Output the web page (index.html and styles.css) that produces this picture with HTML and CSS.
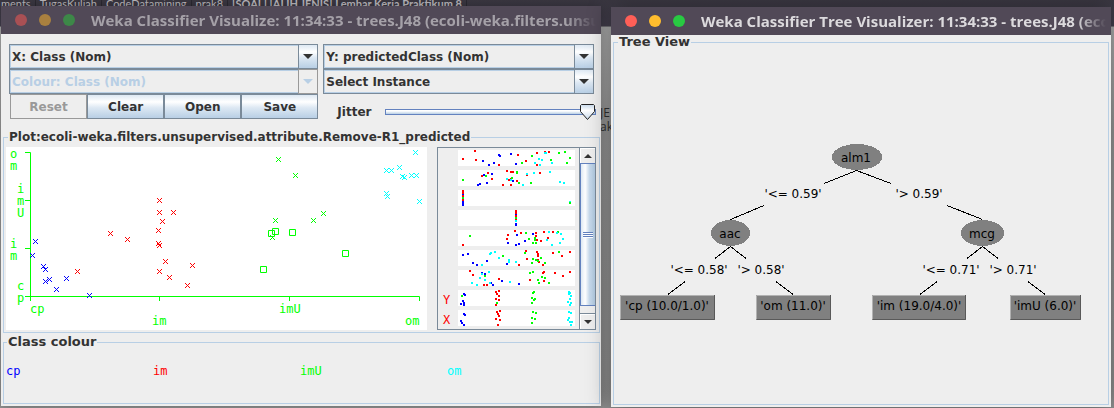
FILE: index.html
```html
<!DOCTYPE html>
<html lang="en">
<head>
<meta charset="utf-8">
<title>Weka Classifier Visualize</title>
<link rel="stylesheet" href="styles.css">
</head>
<body>
<div class="taskbar"><span>ments</span><span>TugasKuliah</span><span>CodeDatamining</span><span>prak8</span><span class="current">[SOAL] [ALIH JENIS] Lembar Kerja Praktikum 8</span></div>
<div class="file-label">JE<br>ak</div>
<main class="desktop">
  <section class="window plot-window">
    <header class="titlebar inactive">
      <i class="dot close"></i><i class="dot minimise"></i><i class="dot maximise"></i>
      <h1>Weka Classifier Visualize: 11:34:33 - trees.J48 (ecoli-weka.filters.unsup</h1>
    </header>
    <div class="window-body">
      <div class="controls">
        <div class="combo"><select aria-label="X axis"><option>X: Class (Nom)</option></select><span class="arrow"></span></div>
        <div class="combo"><select aria-label="Y axis"><option>Y: predictedClass (Nom)</option></select><span class="arrow"></span></div>
        <div class="combo disabled"><select aria-label="Colour" disabled><option>Colour: Class (Nom)</option></select><span class="arrow"></span></div>
        <div class="combo"><select aria-label="Shape"><option>Select Instance</option></select><span class="arrow"></span></div>
        <div class="buttons"><button disabled>Reset</button><button>Clear</button><button>Open</button><button>Save</button></div>
        <div class="jitter"><label for="jitter">Jitter</label><input id="jitter" type="range" min="0" max="100" value="100"></div>
      </div>
      <fieldset class="plot-panel">
        <legend>Plot:ecoli-weka.filters.unsupervised.attribute.Remove-R1_predicted</legend>
        <div class="plots">
          <svg class="plot" viewBox="6 147 421 183" role="img" aria-label="Scatter plot">
            <defs>
              <marker id="x-blue" class="mark" viewBox="0 0 5 5" markerWidth="5" markerHeight="5" refX="2" refY="2" markerUnits="userSpaceOnUse"><path class="cross blue" d="M0 0L5 5M5 0L0 5"/></marker>
              <marker id="x-red" class="mark" viewBox="0 0 5 5" markerWidth="5" markerHeight="5" refX="2" refY="2" markerUnits="userSpaceOnUse"><path class="cross red" d="M0 0L5 5M5 0L0 5"/></marker>
              <marker id="x-green" class="mark" viewBox="0 0 5 5" markerWidth="5" markerHeight="5" refX="2" refY="2" markerUnits="userSpaceOnUse"><path class="cross green" d="M0 0L5 5M5 0L0 5"/></marker>
              <marker id="x-cyan" class="mark" viewBox="0 0 5 5" markerWidth="5" markerHeight="5" refX="2" refY="2" markerUnits="userSpaceOnUse"><path class="cross cyan" d="M0 0L5 5M5 0L0 5"/></marker>
            </defs>
            <path class="axis" d="M25 152.500H30.500V296.500H419.500V301M25 200.500H30M25 248.500H30M25 296.500H30M30.500 296V301M159.500 296V301M289.500 296V301"/>
            <g class="axis-label">
              <text x="10" y="158">o</text><text x="10" y="170">m</text>
              <text x="17" y="193">i</text><text x="17" y="205">m</text><text x="17" y="217">U</text>
              <text x="10" y="248">i</text><text x="10" y="260">m</text>
              <text x="17" y="290">c</text><text x="17" y="302">p</text>
              <text x="30" y="313">cp</text><text x="152" y="325">im</text><text x="279" y="313">imU</text><text x="405" y="325">om</text>
            </g>
            <polyline class="xs-blue" points="35,241 32,255 43,266 45,269 45,281 49,279 66,278 56,289 89,295"/>
            <polyline class="xs-red" points="110,233 127,239 77,271 159,200 159,212 173,212 162,221 158,230 158,243 159,245 165,261 159,271 169,277 187,285 192,265"/>
            <polyline class="xs-green" points="278,159 295,175 323,213 313,220 275,220 272,237"/>
            <polyline class="xs-cyan" points="415,152 386,170 391,170 399,167 402,176 404,177 411,175 416,175 386,193 387,196 419,201"/>
            <path class="axis" d="M268.500 230.500h6v6h-6zM272.500 228.500h6v6h-6zM289.500 229.500h6v6h-6zM342.500 250.500h6v6h-6zM260.500 266.500h6v6h-6z"/>
          </svg>
          <div class="strips">
            <svg class="strip-plot" viewBox="8 8 141 181" role="img" aria-label="Attribute strips">
              <defs>
                <marker id="d-blue" markerWidth="2" markerHeight="2" refX="1" refY="1" markerUnits="userSpaceOnUse"><rect class="fill-blue" width="2" height="2"/></marker>
                <marker id="d-red" markerWidth="2" markerHeight="2" refX="1" refY="1" markerUnits="userSpaceOnUse"><rect class="fill-red" width="2" height="2"/></marker>
                <marker id="d-green" markerWidth="2" markerHeight="2" refX="1" refY="1" markerUnits="userSpaceOnUse"><rect class="fill-green" width="2" height="2"/></marker>
                <marker id="d-cyan" markerWidth="2" markerHeight="2" refX="1" refY="1" markerUnits="userSpaceOnUse"><rect class="fill-cyan" width="2" height="2"/></marker>
              </defs>
              <path class="strip" d="M28 10h117v16h-117zM28 30h117v16h-117zM28 50h117v16h-117zM28 70h117v16h-117zM28 90h117v16h-117zM28 110h117v16h-117zM28 130h117v16h-117zM28 150h117v16h-117zM28 170h117v16h-117z"/>
              <polyline class="ds-red" points="33,19 45,11 46,20 69,25 88,15 96,21 107,13 115,12 119,12 107,25 52,36 58,33 62,39 77,31 81,32 83,32 79,40 81,39 87,41 73,45 81,45 110,33 97,35 33,105 85,91 78,95 77,99 91,93 106,93 106,96 107,100 111,101 114,92 123,92 118,98 89,125 96,111 97,119 107,112 108,114 108,116 108,120 109,122 113,125 123,113 132,116 140,112 40,131 43,135 54,145 57,145 69,139 100,140 113,133 114,132 114,141 125,133 133,136 140,132 66,152 69,151 67,154 69,156 66,159 69,160 66,165 70,171 67,172 68,174 69,176 66,179 70,180 68,185"/>
              <polyline class="ds-blue" points="53,21 59,25 64,23 69,15 70,16 81,14 86,24 54,35 62,34 57,43 48,45 50,44 83,41 87,95 78,103 86,105 89,104 95,101 103,94 33,115 38,114 43,123 47,125 57,121 77,124 52,133 55,134 61,143 63,145 72,141 89,144 34,154 35,155 33,161 31,164 34,163 34,165 34,174 35,175 31,181 32,183 34,185"/>
              <polyline class="ds-green" points="92,23 102,16 121,20 129,13 135,12 140,18 137,23 33,40 56,36 87,32 87,33 82,38 89,43 101,43 40,96 96,93 99,99 105,98 105,100 103,103 106,103 128,92 73,116 95,113 103,119 106,120 111,118 115,123 102,123 108,121 129,112 55,136 100,133 103,132 108,140 109,143 112,137 115,138 119,143 32,156 67,163 103,153 104,152 102,158 105,159 104,160 102,163 103,172 106,173 102,178 105,179 102,183"/>
              <polyline class="ds-cyan" points="109,19 105,23 112,20 110,25 116,13 122,23 115,13 77,39 81,40 93,45 97,34 104,33 120,32 130,42 134,43 119,92 127,93 131,94 133,99 130,103 122,105 117,100 60,114 61,113 65,112 69,118 79,120 79,122 86,122 52,125 42,143 47,145 50,138 52,134 59,132 60,143 80,142 55,140 139,152 140,153 139,154 141,156 140,159 138,162 141,163 140,165 139,172 141,173 139,178 138,180 140,182 142,182 141,185"/>
              <path class="fill-red" d="M32 50h2v4h-2zM32 55h2v2h-2zM32 59h2v2h-2zM85 70h2v4h-2zM85 75h2v2h-2zM85 79h2v1h-2z"/>
              <path class="fill-blue" d="M32 54h2v1h-2zM32 61h2v5h-2zM85 74h2v1h-2zM85 83h2v3h-2z"/>
              <path class="fill-green" d="M32 57h2v2h-2zM85 77h2v2h-2zM139 62h2v2h-2z"/>
              <path class="fill-cyan" d="M85 80h2v2h-2zM139 61h2v1h-2z"/>
              <g class="strip-label"><text x="13" y="164">Y</text><text x="13" y="184">X</text></g>
            </svg>
            <div class="scrollbar"><button class="up" aria-label="Scroll up"></button><div class="thumb"><i></i></div><div class="trough"></div><button class="down" aria-label="Scroll down"></button></div>
          </div>
        </div>
      </fieldset>
      <fieldset class="class-panel">
        <legend>Class colour</legend>
        <div class="classes"><span class="c-blue">cp</span><span class="c-red">im</span><span class="c-green">imU</span><span class="c-cyan">om</span></div>
      </fieldset>
    </div>
  </section>

  <section class="window tree-window">
    <header class="titlebar">
      <i class="dot close"></i><i class="dot minimise"></i><i class="dot maximise"></i>
      <h1>Weka Classifier Tree Visualizer: 11:34:33 - trees.J48 (ecol</h1>
    </header>
    <div class="window-body">
      <fieldset class="tree-panel">
        <legend>Tree View</legend>
        <svg class="tree" viewBox="614 49 494 355" role="img" aria-label="Decision tree">
          <path class="edge" d="M856.500 170.500L824 183.500M764 205.500L730.500 219.500M856.500 170.500L891 183.500M947 205.500L982.500 219.500M730.500 246.500L715 258.500M685 281.500L668 294.500M730.500 246.500L746 258.500M776 281.500L793 294.500M982.500 246.500L967 258.500M937 281.500L920 294.500M982.500 246.500L998 258.500M1028 281.500L1045 294.500"/>
          <ellipse class="node" cx="857" cy="157" rx="25" ry="13"/>
          <ellipse class="node" cx="730.500" cy="233" rx="19.500" ry="13"/>
          <ellipse class="node" cx="982.500" cy="233" rx="21.500" ry="13"/>
          <g class="leaf-box">
            <path class="node" d="M620 295h95v25h-95zM756 295h75v25h-75zM872 295h94v25h-94zM1010 295h71v25h-71z"/>
            <path class="leaf-light" d="M620.500 319V295.500H714M756.500 319V295.500H830M872.500 319V295.500H965M1010.500 319V295.500H1080"/>
            <path class="leaf-dark" d="M621 319.500H714.500V295M757 319.500H830.500V295M873 319.500H965.500V295M1011 319.500H1080.500V295"/>
          </g>
          <g class="tree-label">
            <text x="856" y="162">alm1</text><text x="730" y="238">aac</text><text x="982" y="238">mcg</text>
            <text x="793" y="198">'&lt;= 0.59'</text><text x="919" y="198">'&gt; 0.59'</text>
            <text x="699" y="274">'&lt;= 0.58'</text><text x="761" y="274">'&gt; 0.58'</text>
            <text x="951" y="274">'&lt;= 0.71'</text><text x="1013" y="274">'&gt; 0.71'</text>
            <text x="667" y="310">'cp (10.0/1.0)'</text><text x="793" y="310">'om (11.0)'</text>
            <text x="919" y="310">'im (19.0/4.0)'</text><text x="1045" y="310">'imU (6.0)'</text>
          </g>
        </svg>
      </fieldset>
    </div>
  </section>
</main>
</body>
</html>
```
FILE: styles.css
```css
* { box-sizing: border-box; }
body {
  margin: 0;
  min-height: 100vh;
  overflow: hidden;
  position: relative;
  background: linear-gradient(#3d3a46 0 26px, #b2b2b2 27px, #9c9c9c 130px, #959595);
  font: bold 12px/14px "DejaVu Sans", sans-serif;
  color: #333;
}
.taskbar {
  position: absolute;
  inset: 0 0 auto;
  height: 26px;
  display: flex;
  white-space: nowrap;
  background: linear-gradient(#3b3842, #464150);
  color: #bfbcc0;
  font: 11px/14px "Lato", sans-serif;
}
.taskbar span { margin-top: -3px; padding: 0 4px; border-right: 1px solid #2c2a33; }
.taskbar span:first-child { padding-left: 1px; }
.taskbar .current { font-weight: bold; }
.file-label {
  position: absolute;
  left: 600px;
  top: 106px;
  font: 12px/14px "Open Sans", sans-serif;
}
.desktop { position: relative; display: flex; align-items: flex-start; gap: 10px; padding: 6px 3px 1px 1px; }
.window { min-width: 0; background: #eee; box-shadow: 0 0 12px rgba(0, 0, 0, .35); }
.plot-window { flex: 6 1 0; }
.tree-window { flex: 5 1 0; margin-top: 1px; box-shadow: 0 2px 22px rgba(0, 0, 0, .45); }
.titlebar {
  display: flex;
  align-items: center;
  height: 28px;
  padding: 0 5px 0 14px;
  gap: 12px;
  background: #514957;
  color: #dcdadd;
}
.titlebar h1 {
  flex: 1;
  min-width: 0;
  margin: 0 0 0 4px;
  overflow: hidden;
  white-space: nowrap;
  font: bold 15px/22px "Open Sans", sans-serif;
  mask-image: linear-gradient(to left, transparent, #000 30px);
}
.dot { width: 12px; height: 12px; border-radius: 50%; }
.close { background: #ff5f57; }
.minimise { background: #ffbd2e; }
.maximise { background: #28ca42; }
.inactive { color: #a5a1a8; }
.inactive .close { background: #a95054; }
.inactive .minimise { background: #a9803f; }
.inactive .maximise { background: #3d8848; }

.plot-window .window-body { padding: 10px 1px 2px 2px; }
.controls { display: grid; grid-template-columns: 8fr 7fr; column-gap: 5px; padding: 0 6px; }
.combo { display: grid; grid-template-columns: minmax(0, 1fr) 20px; height: 25px; }
.combo select {
  grid-area: 1 / 1 / 2 / 3;
  appearance: none;
  margin: 0;
  padding: 0 22px 0 2px;
  border: 1px solid #7a8a99;
  border-radius: 0;
  outline: 1px solid #b8cfe5;
  outline-offset: -2px;
  background: #eee;
  color: #333;
  font: inherit;
}
.combo .arrow {
  grid-area: 1 / 2;
  display: grid;
  place-items: center;
  border: 1px solid #7a8a99;
  background: linear-gradient(#dde8f3, #fff 30%, #dde8f3 55%, #b8cfe5);
  pointer-events: none;
}
.arrow::after { content: ""; border: 5px solid transparent; border-top-color: #333; border-bottom: 0; }
.combo.disabled select { color: #b8cfe5; opacity: 1; }
.disabled .arrow { background: #eee; border-color: #999; }
.disabled .arrow::after { border-top-color: #b8cfe5; }
.buttons { display: grid; grid-template-columns: repeat(4, 1fr); height: 25px; padding: 0 0 0 1px; }
.buttons button {
  margin: 0;
  padding: 0;
  border: 1px solid #7a8a99;
  background: linear-gradient(#dde8f3, #fff 30%, #dde8f3 55%, #b8cfe5);
  color: #333;
  font: inherit;
}
.buttons button:disabled { border-color: #999; background: #eee; color: #999; }
.jitter { display: flex; align-items: center; gap: 14px; padding: 10px 0 0 14px; height: 25px; }
.jitter input { flex: 1; min-width: 0; height: 16px; margin: 0 -2px 0 0; appearance: none; background: none; }
.jitter input::-webkit-slider-runnable-track {
  height: 6px;
  border: 1px solid #6382bf;
  background: linear-gradient(#fff 0 1px, #b8cfe5);
}
.jitter input::-webkit-slider-thumb {
  appearance: none;
  width: 15px;
  height: 16px;
  margin-top: -6px;
  border: 0;
  background: url("data:image/svg+xml,%3Csvg xmlns='http://www.w3.org/2000/svg' width='15' height='16'%3E%3Cdefs%3E%3ClinearGradient id='g' x2='0' y2='1'%3E%3Cstop stop-color='%23c8daec'/%3E%3Cstop offset='.4' stop-color='white'/%3E%3Cstop offset='1' stop-color='%23c8daec'/%3E%3C/linearGradient%3E%3C/defs%3E%3Cpath d='M1.5.5h12l1 1v6l-7 8-7-8v-6z' fill='url(%23g)' stroke='%23222'/%3E%3C/svg%3E");
}
fieldset { min-width: 0; margin: 0; border: 1px solid #b8cfe5; }
legend { margin: 0; padding: 0 1px; height: 14px; white-space: nowrap; font-size: 13px; }
.plot-panel { margin-top: 11px; padding: 3px 3px 2px 2px; }
.plots { display: flex; gap: 10px; align-items: stretch; }
.plot { flex: 421 1 0; min-width: 0; background: #fff; }
.strips { flex: 157 1 0; min-width: 0; display: flex; border: 1px solid #7a8a99; }
.strip-plot { flex: 1; min-width: 0; }
.plot-panel legend { margin-left: 2px; font-size: 12px; }
.class-panel legend { margin-left: 1px; }
.cross { fill: none; stroke-width: 1; }
.mark { shape-rendering: crispEdges; }
.blue { stroke: #00f; }
.red { stroke: #f00; }
.green { stroke: #0f0; }
.cyan { stroke: #0ff; }
.fill-blue { fill: #00f; }
.fill-red { fill: #f00; }
.fill-green { fill: #0f0; }
.fill-cyan { fill: #0ff; }
polyline { fill: none; stroke: none; }
.xs-blue { marker: url(#x-blue); }
.xs-red { marker: url(#x-red); }
.xs-green { marker: url(#x-green); }
.xs-cyan { marker: url(#x-cyan); }
.ds-blue { marker: url(#d-blue); }
.ds-red { marker: url(#d-red); }
.ds-green { marker: url(#d-green); }
.ds-cyan { marker: url(#d-cyan); }
.axis { fill: none; stroke: #0f0; }
.axis-label { fill: #0f0; font: 12px "DejaVu Sans Mono", monospace; }
.strip { fill: #fff; }
.strip-label { fill: #f00; font: 12px "DejaVu Sans Mono", monospace; }
.scrollbar { width: 16px; display: flex; flex-direction: column; border-left: 1px solid #7a8a99; }
.scrollbar button { display: grid; place-items: center; height: 15px; padding: 0; border: 0; background: #eee; box-shadow: inset 1px 1px #fff; }
.scrollbar button::after { content: ""; border: 4px solid transparent; }
.scrollbar .up::after { border-bottom-color: #333; border-top: 0; }
.scrollbar .down::after { border-top-color: #333; border-bottom: 0; }
.thumb {
  flex: 1;
  display: grid;
  place-items: center;
  border: 1px solid #6382bf;
  border-right: 0;
  background: linear-gradient(to right, #dde8f3, #fff 30%, #c8daec 60%, #b0c8df);
}
.thumb i { width: 10px; height: 6px; background: repeating-linear-gradient(#6382bf 0 1px, #fff 1px 2px); }
.trough { height: 8px; border-bottom: 1px solid #7a8a99; background: #eee; }
.class-panel { margin-top: 2px; padding: 15px 0 25px 2px; }
.classes { display: grid; grid-template-columns: repeat(4, 1fr); font: 12px/14px "DejaVu Sans Mono", monospace; }
.classes { padding-right: 5px; }
.c-blue { color: #00f; }
.c-red { color: #f00; }
.c-green { color: #0f0; }
.c-cyan { color: #0ff; }

.tree-window .window-body { padding: 0 2px 2px; }
.tree-panel { padding: 0; }
.tree-panel legend { margin-left: 4px; }
.tree { display: block; width: 100%; }
.edge { fill: none; stroke: #000; shape-rendering: crispEdges; }
.node { fill: #808080; shape-rendering: crispEdges; }
.leaf-light { fill: none; stroke: #b2b2b2; }
.leaf-dark { fill: none; stroke: #595959; }
.tree-label { fill: #000; font: 12px "DejaVu Sans", sans-serif; text-anchor: middle; }
```
